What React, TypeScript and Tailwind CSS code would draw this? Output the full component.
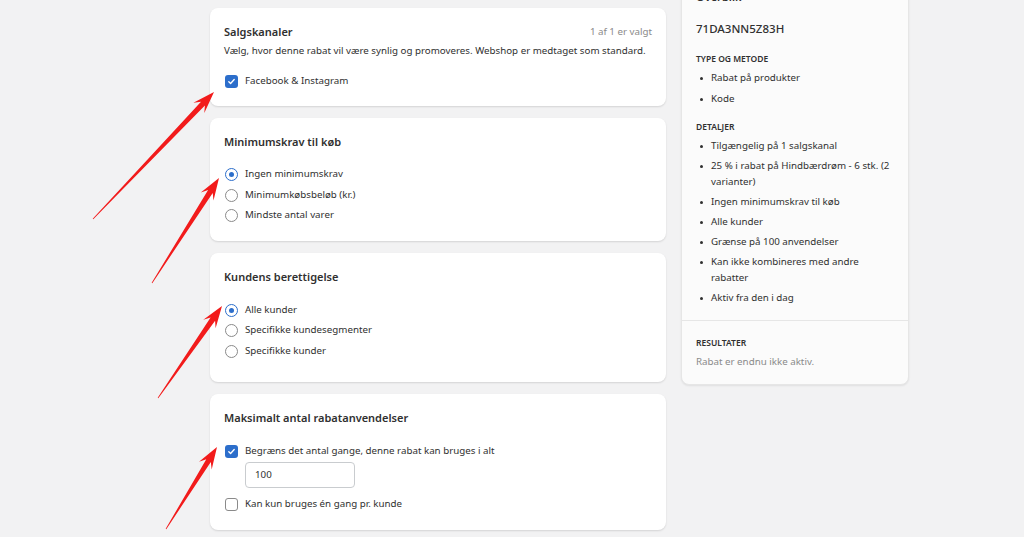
import React from 'react';

const font = { fontFamily: '"Noto Sans", "Open Sans", sans-serif' };

type Pt = [number, number];

const arrows: [Pt, Pt][] = [
  [[93, 219], [214, 92]],
  [[152, 283], [219, 178]],
  [[158, 398], [222, 306]],
  [[166, 529], [217, 447]],
];

function arrowPoints(tail: Pt, tip: Pt) {
  const dx = tip[0] - tail[0];
  const dy = tip[1] - tail[1];
  const len = Math.hypot(dx, dy);
  const ux = dx / len;
  const uy = dy / len;
  const nx = -uy;
  const ny = ux;
  const at = (back: number, side: number): string =>
    `${(tip[0] - ux * back + nx * side).toFixed(1)},${(tip[1] - uy * back + ny * side).toFixed(1)}`;
  const t = (side: number) =>
    `${(tail[0] + nx * side).toFixed(1)},${(tail[1] + ny * side).toFixed(1)}`;
  return [t(0.4), at(16, 2.7), at(22, 7.5), at(0, 0), at(22, -7.5), at(16, -2.7), t(-0.4)].join(' ');
}

const Checkbox = ({ checked }: { checked: boolean }) =>
  checked ? (
    <span className="flex h-[13px] w-[13px] items-center justify-center rounded-[3px] bg-[#2c6ecb]">
      <svg width="9" height="9" viewBox="0 0 10 10" fill="none">
        <path d="M2 5.2l2 2 4-4.4" stroke="white" strokeWidth="1.5" strokeLinecap="round" strokeLinejoin="round" />
      </svg>
    </span>
  ) : (
    <span className="h-[13px] w-[13px] rounded-[3px] border border-[#8a8a8a] bg-white" />
  );

const Radio = ({ checked }: { checked: boolean }) =>
  checked ? (
    <span className="flex h-[13px] w-[13px] items-center justify-center rounded-full border-[1.5px] border-[#2c6ecb] bg-white">
      <span className="h-[5px] w-[5px] rounded-full bg-[#2c6ecb]" />
    </span>
  ) : (
    <span className="h-[13px] w-[13px] rounded-full border border-[#8a8a8a] bg-white" />
  );

const Option = ({ label, children }: { label: string; children: React.ReactNode }) => (
  <div className="flex h-[20.5px] items-center gap-[7px] pl-[1px]">
    {children}
    <span className="text-[9.75px] text-[#303030]">{label}</span>
  </div>
);

const Card = ({ title, children, className = '' }: { title: string; children: React.ReactNode; className?: string }) => (
  <div className={`rounded-lg bg-white px-[14px] pt-[14px] shadow-[0_1px_2px_rgba(0,0,0,0.13)] ${className}`}>
    <h2 className="h-5 text-[11px] font-semibold leading-5 text-[#303030]">{title}</h2>
    {children}
  </div>
);

const Bullet = ({ children }: { children: React.ReactNode }) => (
  <li className="flex items-start">
    <span className="mx-[4px] mt-[6.5px] h-[3px] w-[3px] shrink-0 rounded-full bg-[#303030]" />
    <span className="ml-[4px] text-[9.75px] leading-4 text-[#303030]">{children}</span>
  </li>
);

const Heading = ({ children }: { children: React.ReactNode }) => (
  <h3 className="h-4 text-[8.5px] font-semibold uppercase leading-4 text-[#303030]">{children}</h3>
);

export default function App() {
  return (
    <div className="relative h-[537px] w-[1024px] overflow-hidden bg-[#f2f2f3]" style={font}>
      <div className="flex items-start gap-[15px] pl-[210px]">
        <div className="flex w-[456px] flex-col gap-[12px] pt-[8px]">
          <div className="rounded-lg bg-white px-[14px] pb-[14px] pt-[14px] shadow-[0_1px_2px_rgba(0,0,0,0.13)]">
            <div className="flex h-5 items-center justify-between">
              <h2 className="text-[11px] font-semibold text-[#303030]">Salgskanaler</h2>
              <span className="text-[9.75px] text-[#8a8a8a]">1 af 1 er valgt</span>
            </div>
            <p className="mt-px text-[9.75px] leading-4 text-[#303030]">
              Vælg, hvor denne rabat vil være synlig og promoveres. Webshop er medtaget som standard.
            </p>
            <div className="mt-[12px]">
              <Option label="Facebook & Instagram">
                <Checkbox checked />
              </Option>
            </div>
          </div>

          <Card title="Minimumskrav til køb" className="pb-[15px]">
            <div className="mt-[13px]">
              <Option label="Ingen minimumskrav">
                <Radio checked />
              </Option>
              <Option label="Minimumkøbsbeløb (kr.)">
                <Radio checked={false} />
              </Option>
              <Option label="Mindste antal varer">
                <Radio checked={false} />
              </Option>
            </div>
          </Card>

          <Card title="Kundens berettigelse" className="pb-[20px]">
            <div className="mt-[13px]">
              <Option label="Alle kunder">
                <Radio checked />
              </Option>
              <Option label="Specifikke kundesegmenter">
                <Radio checked={false} />
              </Option>
              <Option label="Specifikke kunder">
                <Radio checked={false} />
              </Option>
            </div>
          </Card>

          <Card title="Maksimalt antal rabatanvendelser" className="pb-[15px]">
            <div className="mt-[14px]">
              <Option label="Begræns det antal gange, denne rabat kan bruges i alt">
                <Checkbox checked />
              </Option>
              <div className="ml-[21px] flex h-[26px] w-[110px] items-center rounded-[4px] border border-[#c9cccf] px-[9px] text-[9.75px] text-[#303030]">
                100
              </div>
              <div className="mt-[6px]">
                <Option label="Kan kun bruges én gang pr. kunde">
                  <Checkbox checked={false} />
                </Option>
              </div>
            </div>
          </Card>
        </div>

        <div className="-mt-[28px] w-[228px] rounded-lg border border-[#e6e6e6] bg-[#fbfbfb] shadow-[0_1px_2px_rgba(0,0,0,0.08)]">
          <div className="px-[14px] pb-[14px] pt-[14px]">
            <h2 className="h-5 text-[11px] font-semibold leading-5 text-[#303030]">Overblik</h2>
            <div className="mt-[12px] h-5 text-[11.5px] font-medium leading-5 text-[#303030]">71DA3NN5Z83H</div>
            <div className="mt-[12px]">
              <Heading>Type og metode</Heading>
              <ul className="mt-[3px] flex flex-col gap-[5px]">
                <Bullet>Rabat på produkter</Bullet>
                <Bullet>Kode</Bullet>
              </ul>
            </div>
            <div className="mt-[12px]">
              <Heading>Detaljer</Heading>
              <ul className="mt-[3px] flex flex-col gap-[4px]">
                <Bullet>Tilgængelig på 1 salgskanal</Bullet>
                <Bullet>25 % i rabat på Hindbærdrøm - 6 stk. (2 varianter)</Bullet>
                <Bullet>Ingen minimumskrav til køb</Bullet>
                <Bullet>Alle kunder</Bullet>
                <Bullet>Grænse på 100 anvendelser</Bullet>
                <Bullet>Kan ikke kombineres med andre rabatter</Bullet>
                <Bullet>Aktiv fra den i dag</Bullet>
              </ul>
            </div>
          </div>
          <div className="border-t border-[#e6e6e6] px-[14px] pb-[14px] pt-[14px]">
            <Heading>Resultater</Heading>
            <p className="mt-[3px] text-[9.75px] leading-4 text-[#8a8a8a]">Rabat er endnu ikke aktiv.</p>
          </div>
        </div>
      </div>

      <svg className="pointer-events-none absolute inset-0" width="1024" height="537">
        {arrows.map(([tail, tip], i) => (
          <polygon key={i} points={arrowPoints(tail, tip)} fill="#f21b1b" />
        ))}
      </svg>
    </div>
  );
}
